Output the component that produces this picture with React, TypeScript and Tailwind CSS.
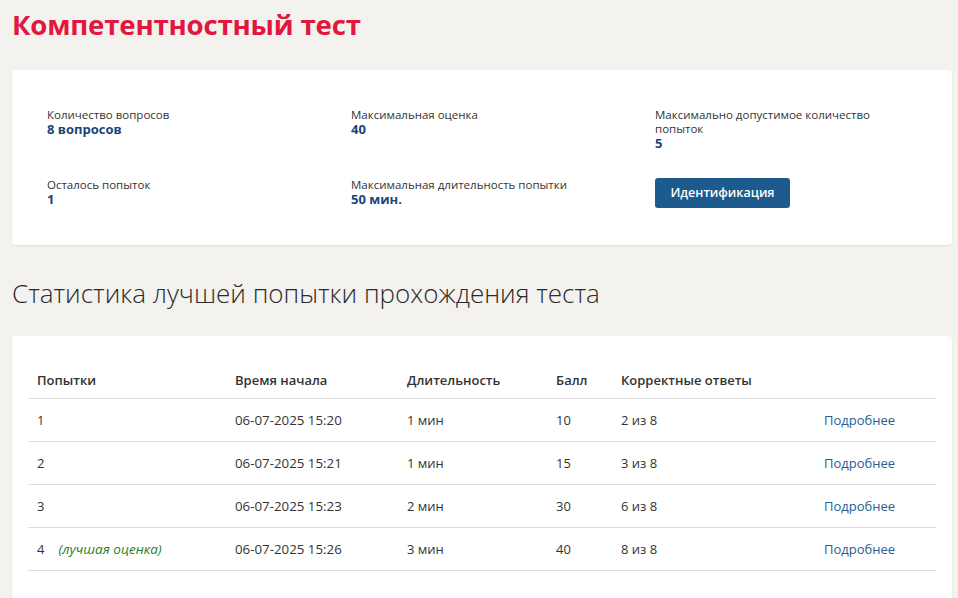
import React from 'react';

const font = { fontFamily: '"Open Sans", "Noto Sans", sans-serif' };

type Attempt = {
  n: number;
  best?: boolean;
  start: string;
  duration: string;
  score: number;
  correct: string;
};

const attempts: Attempt[] = [
  { n: 1, start: '06-07-2025 15:20', duration: '1 мин', score: 10, correct: '2 из 8' },
  { n: 2, start: '06-07-2025 15:21', duration: '1 мин', score: 15, correct: '3 из 8' },
  { n: 3, start: '06-07-2025 15:23', duration: '2 мин', score: 30, correct: '6 из 8' },
  { n: 4, best: true, start: '06-07-2025 15:26', duration: '3 мин', score: 40, correct: '8 из 8' },
];

function Info({ label, value }: { label: string; value: string }) {
  return (
    <div className="flex flex-col">
      <span className="text-[11.5px] leading-[14px] text-[#333]">{label}</span>
      <span className="text-[13px] leading-[15px] font-bold text-[#1d4577]">{value}</span>
    </div>
  );
}

export default function App() {
  return (
    <div className="min-h-screen bg-[#f3f2ef] pl-3 pr-[6px] pb-10" style={font}>
      {/* ── Title ─────────────────────────────────────────────── */}
      <h1 className="pt-[6px] text-[27.6px] leading-[36px] font-bold text-[#e2173d] tracking-[-0.2px]">
        Компетентностный тест
      </h1>

      {/* ── Test info card ────────────────────────────────────── */}
      <div className="mt-[28px] bg-white rounded-[4px] shadow-[0_1px_2px_rgba(0,0,0,0.08)] pl-[35px] pt-[38px] pb-[37px]">
        <div className="grid grid-cols-[304px_304px_1fr] gap-y-[27px]">
          <Info label="Количество вопросов" value="8 вопросов" />
          <Info label="Максимальная оценка" value="40" />
          <div className="max-w-[225px]">
            <Info label="Максимально допустимое количество попыток" value="5" />
          </div>
          <Info label="Осталось попыток" value="1" />
          <Info label="Максимальная длительность попытки" value="50 мин." />
          <div>
            <button className="h-[30px] w-[135px] rounded-[3px] bg-[#1d5a8e] text-white text-[12.5px] font-semibold">
              Идентификация
            </button>
          </div>
        </div>
      </div>

      {/* ── Stats heading ─────────────────────────────────────── */}
      <h2 className="mt-[32px] text-[26px] leading-[32px] font-light text-[#2b2b2b]">
        Статистика лучшей попытки прохождения теста
      </h2>

      {/* ── Stats table card ──────────────────────────────────── */}
      <div className="mt-[27px] bg-white rounded-[4px] shadow-[0_1px_2px_rgba(0,0,0,0.08)] px-4 pt-[27px] pb-[30px]">
        <table className="w-full border-collapse text-[13px] text-[#333]">
          <colgroup>
            <col className="w-[198px]" />
            <col className="w-[172px]" />
            <col className="w-[149px]" />
            <col className="w-[65px]" />
            <col className="w-[203px]" />
            <col />
          </colgroup>
          <thead>
            <tr className="border-b border-[#dedede]">
              <th className="h-[35px] pl-[9px] text-left font-semibold">Попытки</th>
              <th className="pl-[9px] text-left font-semibold">Время начала</th>
              <th className="pl-[9px] text-left font-semibold">Длительность</th>
              <th className="pl-[9px] text-left font-semibold">Балл</th>
              <th className="pl-[9px] text-left font-semibold">Корректные ответы</th>
              <th />
            </tr>
          </thead>
          <tbody>
            {attempts.map((a) => (
              <tr key={a.n} className="border-b border-[#dedede]">
                <td className="h-[43px] pl-[9px] pt-[2px]">
                  {a.n}
                  {a.best && (
                    <span className="ml-[14px] text-[13.5px] italic text-[#2a7d1f]">(лучшая оценка)</span>
                  )}
                </td>
                <td className="pl-[9px] pt-[2px] text-[13.3px]">{a.start}</td>
                <td className="pl-[9px] pt-[2px]">{a.duration}</td>
                <td className="pl-[9px] pt-[2px]">{a.score}</td>
                <td className="pl-[9px] pt-[2px]">{a.correct}</td>
                <td className="pl-[9px] pt-[2px]">
                  <a href="#" className="text-[#2a5d8f]">Подробнее</a>
                </td>
              </tr>
            ))}
          </tbody>
        </table>
      </div>
    </div>
  );
}
